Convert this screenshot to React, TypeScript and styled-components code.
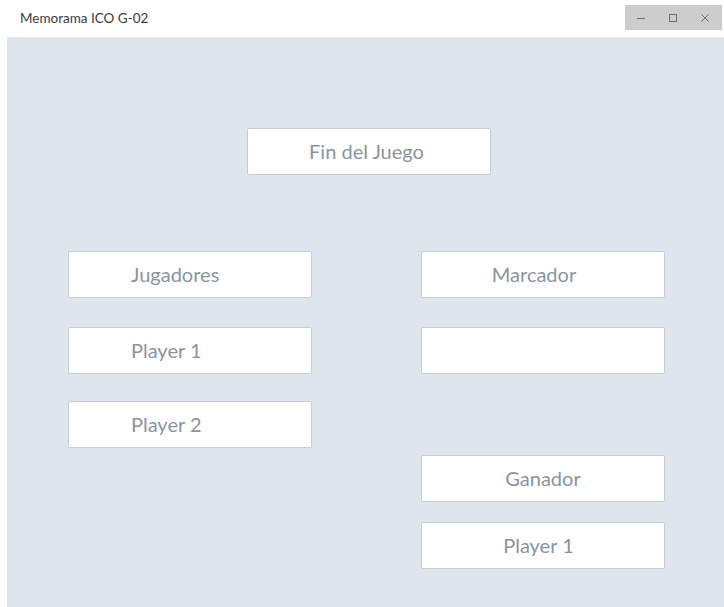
import React from "react";
import styled, { createGlobalStyle } from "styled-components";

const Global = createGlobalStyle`
  html, body { margin: 0; padding: 0; background: #ffffff; }
  body { font-family: Lato, "Open Sans", sans-serif; width: 724px; height: 607px; overflow: hidden; }
`;

const Window = styled.div`
  width: 724px;
  height: 607px;
  display: flex;
  flex-direction: column;
  background: #ffffff;
`;

const TitleBar = styled.div`
  height: 37px;
  display: flex;
  align-items: flex-start;
  justify-content: space-between;
  flex-shrink: 0;
`;

const Title = styled.div`
  font-family: Lato, sans-serif;
  font-size: 13.5px;
  color: #3c3c3c;
  padding: 10px 0 0 20px;
  line-height: 16px;
`;

const Controls = styled.div`
  margin-top: 5px;
  margin-right: 2px;
  width: 97px;
  height: 25px;
  background: #cdcdcd;
  display: flex;
`;

const Ctrl = styled.div`
  width: 32px;
  height: 25px;
  display: flex;
  align-items: center;
  justify-content: center;
`;

const Content = styled.div`
  flex: 1;
  margin-left: 7px;
  background: #dfe5ed;
  display: flex;
  flex-direction: column;
  padding-top: 91px;
`;

const TopRow = styled.div`
  padding-left: 240px;
`;

const Columns = styled.div`
  display: flex;
  gap: 109px;
  padding-left: 61px;
  margin-top: 76px;
`;

const Column = styled.div`
  display: flex;
  flex-direction: column;
  width: 244px;
`;

const Box = styled.div<{ $mt?: number; $align?: "left" | "center"; $shift?: number }>`
  box-sizing: border-box;
  width: 244px;
  height: 47px;
  margin-top: ${(p) => p.$mt ?? 0}px;
  background: #ffffff;
  border: 1px solid #c6ccd4;
  border-radius: 2px;
  display: flex;
  align-items: center;
  justify-content: ${(p) => (p.$align === "left" ? "flex-start" : "center")};
  padding-left: ${(p) => (p.$align === "left" ? 62 : 0)}px;
  padding-right: ${(p) => p.$shift ?? 0}px;
  padding-bottom: 1px;
  font-family: Lato, sans-serif;
  font-size: 20px;
  color: #8a949f;
  line-height: 24px;
`;

export default function App() {
  return (
    <>
      <Global />
      <Window>
        <TitleBar>
          <Title>Memorama ICO G-02</Title>
          <Controls>
            <Ctrl>
              <svg width="10" height="10" viewBox="0 0 10 10">
                <line x1="1" y1="5.5" x2="9" y2="5.5" stroke="#707070" strokeWidth="1" />
              </svg>
            </Ctrl>
            <Ctrl>
              <svg width="10" height="10" viewBox="0 0 10 10">
                <rect x="1.5" y="1.5" width="7" height="7" fill="none" stroke="#707070" strokeWidth="1" />
              </svg>
            </Ctrl>
            <Ctrl>
              <svg width="10" height="10" viewBox="0 0 10 10">
                <path d="M1.5 1.5 L8.5 8.5 M8.5 1.5 L1.5 8.5" stroke="#707070" strokeWidth="1" />
              </svg>
            </Ctrl>
          </Controls>
        </TitleBar>
        <Content>
          <TopRow>
            <Box $shift={5}>Fin del Juego</Box>
          </TopRow>
          <Columns>
            <Column>
              <Box $align="left">Jugadores</Box>
              <Box $align="left" $mt={29}>Player 1</Box>
              <Box $align="left" $mt={27}>Player 2</Box>
            </Column>
            <Column>
              <Box $shift={18}>Marcador</Box>
              <Box $mt={29}></Box>
              <Box $mt={81}>Ganador</Box>
              <Box $mt={20} $shift={9}>Player 1</Box>
            </Column>
          </Columns>
        </Content>
      </Window>
    </>
  );
}
